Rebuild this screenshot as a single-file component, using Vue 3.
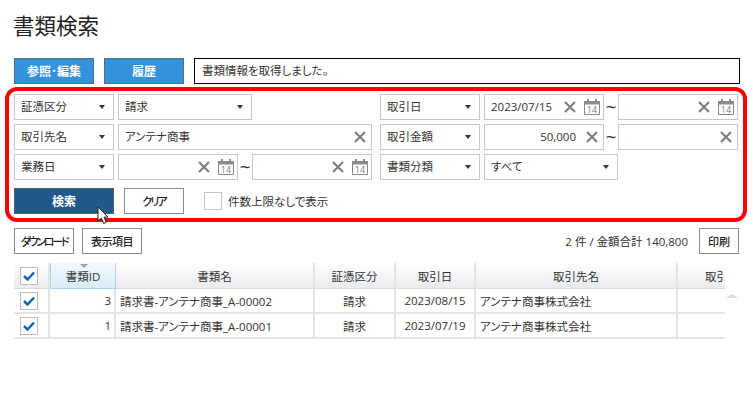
<script setup>
const rows = [
  { id: 3, name: '請求書-アンテナ商事_A-00002', kind: '請求', date: '2023/08/15', partner: 'アンテナ商事株式会社' },
  { id: 1, name: '請求書-アンテナ商事_A-00001', kind: '請求', date: '2023/07/19', partner: 'アンテナ商事株式会社' }
]
const heads = ['書類名', '証憑区分', '取引日', '取引先名', '取引金額']
</script>

<template>
  <div class="page">
    <h1 class="title">書類検索</h1>

    <div class="topbar">
      <button class="btn blue">参照･編集</button>
      <button class="btn blue">履歴</button>
      <div class="message">書類情報を取得しました。</div>
    </div>

    <section class="search">
      <div class="row">
        <div class="half">
          <div class="box sel w100"><span>証憑区分</span><i class="caret"></i></div>
          <div class="box sel w134"><span>請求</span><i class="caret"></i></div>
        </div>
        <div class="half">
          <div class="box sel w100"><span>取引日</span><i class="caret"></i></div>
          <div class="box date w120">
            <span class="val">2023/07/15</span>
            <svg class="x" viewBox="0 0 12 12"><path d="M1 1l10 10M11 1L1 11" /></svg>
            <svg class="cal" viewBox="0 0 16 16"><path class="calbody" d="M.5 2.500h15v13H.5z" /><path class="calhead" d="M0 2h16v3.500H0z" /><path class="calhead" d="M3 0h2v3H3zM11 0h2v3h-2z" /><text x="8" y="14.200" text-anchor="middle">14</text></svg>
          </div>
          <span class="tilde">~</span>
          <div class="box date w120">
            <span class="val"></span>
            <svg class="x" viewBox="0 0 12 12"><path d="M1 1l10 10M11 1L1 11" /></svg>
            <svg class="cal" viewBox="0 0 16 16"><path class="calbody" d="M.5 2.500h15v13H.5z" /><path class="calhead" d="M0 2h16v3.500H0z" /><path class="calhead" d="M3 0h2v3H3zM11 0h2v3h-2z" /><text x="8" y="14.200" text-anchor="middle">14</text></svg>
          </div>
        </div>
      </div>

      <div class="row">
        <div class="half">
          <div class="box sel w100"><span>取引先名</span><i class="caret"></i></div>
          <div class="box text w254">
            <span class="val">アンテナ商事</span>
            <svg class="x" viewBox="0 0 12 12"><path d="M1 1l10 10M11 1L1 11" /></svg>
          </div>
        </div>
        <div class="half">
          <div class="box sel w100"><span>取引金額</span><i class="caret"></i></div>
          <div class="box amount w120">
            <span class="val right">50,000</span>
            <svg class="x" viewBox="0 0 12 12"><path d="M1 1l10 10M11 1L1 11" /></svg>
          </div>
          <span class="tilde">~</span>
          <div class="box amount w120">
            <span class="val right"></span>
            <svg class="x" viewBox="0 0 12 12"><path d="M1 1l10 10M11 1L1 11" /></svg>
          </div>
        </div>
      </div>

      <div class="row">
        <div class="half">
          <div class="box sel w100"><span>業務日</span><i class="caret"></i></div>
          <div class="box date w120">
            <span class="val"></span>
            <svg class="x" viewBox="0 0 12 12"><path d="M1 1l10 10M11 1L1 11" /></svg>
            <svg class="cal" viewBox="0 0 16 16"><path class="calbody" d="M.5 2.500h15v13H.5z" /><path class="calhead" d="M0 2h16v3.500H0z" /><path class="calhead" d="M3 0h2v3H3zM11 0h2v3h-2z" /><text x="8" y="14.200" text-anchor="middle">14</text></svg>
          </div>
          <span class="tilde">~</span>
          <div class="box date w120">
            <span class="val"></span>
            <svg class="x" viewBox="0 0 12 12"><path d="M1 1l10 10M11 1L1 11" /></svg>
            <svg class="cal" viewBox="0 0 16 16"><path class="calbody" d="M.5 2.500h15v13H.5z" /><path class="calhead" d="M0 2h16v3.500H0z" /><path class="calhead" d="M3 0h2v3H3zM11 0h2v3h-2z" /><text x="8" y="14.200" text-anchor="middle">14</text></svg>
          </div>
        </div>
        <div class="half">
          <div class="box sel w100"><span>書類分類</span><i class="caret"></i></div>
          <div class="box sel w134"><span>すべて</span><i class="caret"></i></div>
        </div>
      </div>

      <div class="actions">
        <button class="btn navy">検索</button>
        <button class="btn plain clear">クリア</button>
        <span class="cb"></span>
        <span class="cblabel">件数上限なしで表示</span>
      </div>

      <svg class="cursor" viewBox="0 0 14 20"><path d="M1 1v14l3.400-3 2.300 5.500 2.600-1.100-2.300-5.300H11z" /></svg>
    </section>

    <div class="toolbar">
      <button class="btn plain dl">ダウンロード</button>
      <button class="btn plain items">表示項目</button>
      <span class="total">2 件 / 金額合計 140,800</span>
      <button class="btn plain print">印刷</button>
    </div>

    <div class="tablewrap">
      <div class="clip">
        <table>
          <colgroup>
            <col class="c0" /><col class="c1" /><col class="c2" /><col class="c3" /><col class="c4" /><col class="c5" /><col class="c6" />
          </colgroup>
          <thead>
            <tr>
              <th>
                <span class="check"><svg viewBox="0 0 12 10"><path d="M1 5l3.500 3.500L11 1.500" /></svg></span>
              </th>
              <th class="sorted"><i class="sort"></i>書類ID</th>
              <th v-for="h in heads" :key="h">{{ h }}</th>
            </tr>
          </thead>
          <tbody>
            <tr v-for="r in rows" :key="r.id">
              <td class="ck">
                <span class="check"><svg viewBox="0 0 12 10"><path d="M1 5l3.500 3.500L11 1.500" /></svg></span>
              </td>
              <td class="num">{{ r.id }}</td>
              <td class="left">{{ r.name }}</td>
              <td>{{ r.kind }}</td>
              <td>{{ r.date }}</td>
              <td class="left">{{ r.partner }}</td>
              <td></td>
            </tr>
          </tbody>
        </table>
      </div>
      <i class="scrollup"></i>
    </div>
  </div>
</template>

<style>
html, body { margin: 0; background: #fff; }
</style>

<style scoped>
.page {
  width: 753px;
  height: 400px;
  overflow: hidden;
  box-sizing: border-box;
  padding-top: 11px;
  font-family: "Open Sans", "Noto Sans CJK JP", sans-serif;
  font-feature-settings: "palt";
  font-size: 11.500px;
  color: #333;
}
.title {
  margin: 0 0 0 13px;
  height: 47px;
  line-height: 29px;
  font-size: 21.500px;
  font-weight: 400;
  color: #222;
}
.topbar {
  display: flex;
  gap: 10px;
  margin-left: 14px;
  height: 26px;
}
.btn {
  box-sizing: border-box;
  height: 26px;
  padding: 0;
  border-radius: 0;
  font: inherit;
  font-size: 12px;
  white-space: nowrap;
}
.blue {
  width: 80px;
  background: #3492dc;
  border: 1px solid #5a6d80;
  color: #fff;
  font-weight: 700;
}
.message {
  box-sizing: border-box;
  width: 546px;
  height: 26px;
  border: 1px solid #000;
  padding-left: 7px;
  line-height: 24px;
  color: #333;
}
.search {
  position: relative;
  box-sizing: border-box;
  width: 742px;
  height: 135px;
  margin: 3px 0 0 5px;
  padding: 3px 5px 0 5px;
  border: 4px solid #f00;
  border-radius: 12px;
  display: flex;
  flex-direction: column;
  gap: 4px;
}
.row {
  display: flex;
  gap: 8px;
  height: 26px;
}
.half {
  display: flex;
  align-items: center;
  gap: 4px;
  width: 358px;
}
.box {
  box-sizing: border-box;
  height: 26px;
  border: 1px solid #c8c8c8;
  background: #fff;
  display: flex;
  align-items: center;
  flex: none;
  line-height: 24px;
}
.w100 { width: 100px; }
.w120 { width: 120px; }
.w134 { width: 134px; }
.w254 { width: 254px; }
.sel {
  justify-content: space-between;
  padding: 0 8px 0 6px;
}
.caret {
  width: 0;
  height: 0;
  border-left: 3.500px solid transparent;
  border-right: 3.500px solid transparent;
  border-top: 4px solid #333;
}
.val {
  flex: 1;
  min-width: 0;
  padding-left: 6px;
  white-space: nowrap;
}
.right {
  text-align: right;
  padding-right: 10px;
}
.date .x { margin-right: 8px; }
.amount .x, .text .x { margin-right: 5px; }
.x {
  width: 12px;
  height: 12px;
  flex: none;
}
.x path {
  fill: none;
  stroke: #808080;
  stroke-width: 2.200;
}
.cal {
  width: 16px;
  height: 16px;
  flex: none;
  margin-right: 3px;
}
.calbody {
  fill: #fff;
  stroke: #8a8a8a;
}
.calhead { fill: #8a8a8a; }
.cal text {
  font-family: "Open Sans", sans-serif;
  font-size: 9px;
  fill: #808080;
}
.tilde {
  width: 14px;
  margin: 0 -4px;
  text-align: center;
  font-size: 18px;
  line-height: 20px;
  color: #333;
  font-family: "Liberation Sans", sans-serif;
}
.actions {
  display: flex;
  align-items: center;
  height: 26px;
  margin-top: 4px;
}
.navy {
  width: 100px;
  background: #215a8a;
  border: 1px solid #4a6478;
  color: #fff;
  font-weight: 700;
}
.plain {
  background: #fff;
  border: 1px solid #8c8c8c;
  color: #222;
  font-weight: 500;
  font-size: 11px;
}
.clear {
  width: 60px;
  margin-left: 10px;
  letter-spacing: -2px;
}
.cb {
  box-sizing: border-box;
  width: 18px;
  height: 18px;
  margin-left: 20px;
  border: 1px solid #c4c4c4;
}
.cblabel { margin-left: 6px; }
.cursor {
  position: absolute;
  left: 88px;
  top: 115px;
  width: 14px;
  height: 20px;
}
.cursor path {
  fill: #fff;
  stroke: #222;
}
.toolbar {
  display: flex;
  align-items: center;
  height: 26px;
  margin: 6px 0 0 14px;
}
.dl {
  width: 60px;
  letter-spacing: -2.200px;
}
.items {
  width: 60px;
  margin-left: 8px;
  letter-spacing: -0.500px;
}
.total {
  margin-left: auto;
  margin-right: 11px;
}
.print {
  width: 40px;
  margin-right: 14px;
}
.tablewrap {
  position: relative;
  margin: 9px 0 0 14px;
}
.clip {
  width: 711px;
  overflow: hidden;
}
table {
  width: 766px;
  table-layout: fixed;
  border-collapse: separate;
  border-spacing: 0;
}
.c0 { width: 36px; }
.c1 { width: 66px; }
.c2 { width: 199px; }
.c3 { width: 81px; }
.c4 { width: 80px; }
.c5 { width: 202px; }
.c6 { width: 102px; }
th {
  position: relative;
  height: 26px;
  padding: 0;
  box-sizing: border-box;
  font-weight: 400;
  background: linear-gradient(#fff, #e9ebee);
  border-right: 2px solid #e4e4e4;
  border-bottom: 1px solid #dcdcdc;
}
th.sorted {
  background: linear-gradient(#f2f9fd, #d9edf8);
  border: 1px solid #a6d6f0;
  border-top: none;
}
.sort {
  position: absolute;
  left: 29px;
  top: 1px;
  width: 0;
  height: 0;
  border-left: 4px solid transparent;
  border-right: 4px solid transparent;
  border-top: 4px solid #8fa6b8;
}
td {
  box-sizing: border-box;
  height: 25px;
  padding: 0 3px;
  text-align: center;
  white-space: nowrap;
  border-right: 2px solid #e4e4e4;
  border-bottom: 2px solid #e4e4e4;
}
td.left {
  text-align: left;
  padding-left: 4px;
}
td.num { text-align: right; }
th:first-child, td.ck { padding: 0 0 0 6px; text-align: left; }
.check {
  box-sizing: border-box;
  display: flex;
  align-items: center;
  justify-content: center;
  width: 18px;
  height: 18px;
  border: 1px solid #bdbdbd;
  background: #fff;
}
.check svg { width: 12px; height: 10px; }
.check path {
  fill: none;
  stroke: #1565b0;
  stroke-width: 2.500;
}
.scrollup {
  position: absolute;
  left: 712px;
  top: 31px;
  width: 0;
  height: 0;
  border-left: 6px solid transparent;
  border-right: 6px solid transparent;
  border-bottom: 4px solid #dedede;
}
</style>
